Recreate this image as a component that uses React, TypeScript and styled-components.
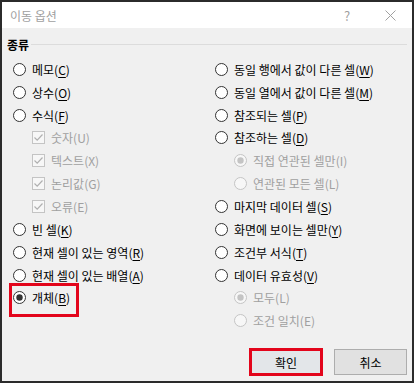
import { createGlobalStyle, styled } from "styled-components";

const GlobalStyle = createGlobalStyle`
  html, body {
    margin: 0;
    padding: 0;
    background: #ffffff;
  }
  * {
    box-sizing: border-box;
  }
`;

const FONT = `"Noto Sans CJK KR", "Noto Sans", sans-serif`;

const Dialog = styled.div`
  width: 414px;
  height: 383px;
  border: 2px solid #2b2b2b;
  background: #f0f0f0;
  font-family: ${FONT};
  font-size: 12px;
  color: #000;
  display: flex;
  flex-direction: column;
`;

const TitleBar = styled.div`
  height: 26px;
  background: #ffffff;
  display: flex;
  align-items: center;
  padding: 0 5px 0 8px;
  color: #a0a0a0;
  font-size: 12px;
  .title {
    flex: 1;
  }
  .help {
    width: 20px;
    margin-right: 16px;
    text-align: center;
    font-size: 13px;
  }
  .close {
    width: 34px;
    display: flex;
    justify-content: center;
  }
`;

const GroupHeader = styled.div`
  display: flex;
  align-items: center;
  gap: 2px;
  padding: 7px 5px 0 5px;
  height: 26px;
  font-weight: 700;
  span {
    line-height: 14px;
  }
  &::after {
    content: "";
    flex: 1;
    height: 1px;
    background: #dcdcdc;
  }
`;

const Columns = styled.div`
  display: grid;
  grid-template-columns: 202px 1fr;
  padding: 4px 0 0 11px;
`;

const Column = styled.div`
  display: flex;
  flex-direction: column;
`;

const Row = styled.div<{ $indent?: boolean; $disabled?: boolean }>`
  height: 22.85px;
  display: flex;
  align-items: center;
  gap: 6px;
  padding-left: ${(p) => (p.$indent ? "19px" : "0")};
  color: ${(p) => (p.$disabled ? "#a0a0a0" : "#000")};
  white-space: nowrap;
  u {
    text-decoration-thickness: 1px;
    text-underline-offset: 2px;
  }
`;

const Highlight = styled.div`
  align-self: flex-start;
  border: 3px solid #e3051b;
  margin: -3px 0 0 -4px;
  width: 70px;
  height: 34px;
  padding: 0 0 5px 1px;
  display: flex;
  align-items: center;
`;

const Footer = styled.div`
  margin-top: auto;
  display: flex;
  justify-content: flex-end;
  align-items: center;
  gap: 11px;
  padding: 0 5px 5px 0;
`;

const Button = styled.button<{ $focused?: boolean }>`
  width: ${(p) => (p.$focused ? "74px" : "73px")};
  height: ${(p) => (p.$focused ? "28px" : "26px")};
  font-family: ${FONT};
  font-size: 12px;
  color: #000;
  background: ${(p) => (p.$focused ? "#e3e6e9" : "#e1e1e1")};
  border: ${(p) => (p.$focused ? "3px solid #e3051b" : "1px solid #adadad")};
  padding: 0;
`;

const Radio = ({ checked, disabled }: { checked?: boolean; disabled?: boolean }) => {
  const stroke = disabled ? "#c4c4c4" : "#333";
  const dot = disabled ? "#c4c4c4" : "#333";
  return (
    <svg width="13" height="13" viewBox="0 0 13 13">
      <circle cx="6.5" cy="6.5" r="6" fill={disabled ? "#f7f7f7" : "#fff"} stroke={stroke} strokeWidth="1" />
      {checked && <circle cx="6.5" cy="6.5" r="3.2" fill={dot} />}
    </svg>
  );
};

const Check = () => (
  <svg width="13" height="13" viewBox="0 0 13 13">
    <rect x="0.5" y="0.5" width="12" height="12" fill="#f7f7f7" stroke="#c4c4c4" />
    <path d="M2.5 6.5 L5.2 9.2 L10.5 3.5" fill="none" stroke="#b0b0b0" strokeWidth="1.2" />
  </svg>
);

type Item = {
  label: string;
  key: string;
  kind: "radio" | "check";
  indent?: boolean;
  disabled?: boolean;
  checked?: boolean;
  highlight?: boolean;
};

const leftItems: Item[] = [
  { label: "메모", key: "C", kind: "radio" },
  { label: "상수", key: "O", kind: "radio" },
  { label: "수식", key: "F", kind: "radio" },
  { label: "숫자", key: "U", kind: "check", indent: true, disabled: true },
  { label: "텍스트", key: "X", kind: "check", indent: true, disabled: true },
  { label: "논리값", key: "G", kind: "check", indent: true, disabled: true },
  { label: "오류", key: "E", kind: "check", indent: true, disabled: true },
  { label: "빈 셀", key: "K", kind: "radio" },
  { label: "현재 셀이 있는 영역", key: "R", kind: "radio" },
  { label: "현재 셀이 있는 배열", key: "A", kind: "radio" },
  { label: "개체", key: "B", kind: "radio", checked: true, highlight: true },
];

const rightItems: Item[] = [
  { label: "동일 행에서 값이 다른 셀", key: "W", kind: "radio" },
  { label: "동일 열에서 값이 다른 셀", key: "M", kind: "radio" },
  { label: "참조되는 셀", key: "P", kind: "radio" },
  { label: "참조하는 셀", key: "D", kind: "radio" },
  { label: "직접 연관된 셀만", key: "I", kind: "radio", indent: true, disabled: true, checked: true },
  { label: "연관된 모든 셀", key: "L", kind: "radio", indent: true, disabled: true },
  { label: "마지막 데이터 셀", key: "S", kind: "radio" },
  { label: "화면에 보이는 셀만", key: "Y", kind: "radio" },
  { label: "조건부 서식", key: "T", kind: "radio" },
  { label: "데이터 유효성", key: "V", kind: "radio" },
  { label: "모두", key: "L", kind: "radio", indent: true, disabled: true, checked: true },
  { label: "조건 일치", key: "E", kind: "radio", indent: true, disabled: true },
];

const Option = ({ item }: { item: Item }) => {
  const content = (
    <>
      {item.kind === "radio" ? <Radio checked={item.checked} disabled={item.disabled} /> : <Check />}
      <span>
        {item.label}(
        {item.disabled ? item.key : <u>{item.key}</u>})
      </span>
    </>
  );
  return (
    <Row $indent={item.indent} $disabled={item.disabled}>
      {item.highlight ? (
        <Highlight>
          <Row>{content}</Row>
        </Highlight>
      ) : (
        content
      )}
    </Row>
  );
};

const App = () => {
  return (
    <>
      <GlobalStyle />
      <Dialog>
        <TitleBar>
          <span className="title">이동 옵션</span>
          <span className="help">?</span>
          <span className="close">
            <svg width="11" height="11" viewBox="0 0 11 11">
              <path d="M0.5 0.5 L10.5 10.5 M10.5 0.5 L0.5 10.5" stroke="#a0a0a0" strokeWidth="1" />
            </svg>
          </span>
        </TitleBar>
        <GroupHeader>
          <span>종류</span>
        </GroupHeader>
        <Columns>
          <Column>
            {leftItems.map((el) => (
              <Option key={el.label} item={el} />
            ))}
          </Column>
          <Column>
            {rightItems.map((el) => (
              <Option key={el.label} item={el} />
            ))}
          </Column>
        </Columns>
        <Footer>
          <Button $focused>확인</Button>
          <Button>취소</Button>
        </Footer>
      </Dialog>
    </>
  );
};

export default App;
